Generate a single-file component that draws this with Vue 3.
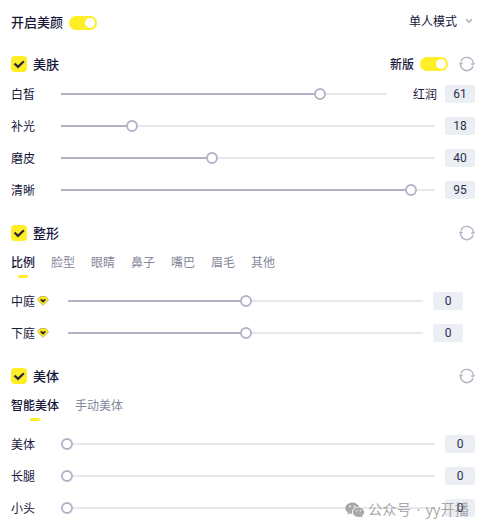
<template>
  <div class="beauty-panel">
    <header class="panel-header">
      <span class="panel-title">开启美颜</span>
      <span class="switch"></span>
      <div class="mode-select">
        <span>单人模式</span>
        <svg class="arrow" viewBox="0 0 8 6">
          <path d="M1 1.2 L4 4.2 L7 1.2" />
        </svg>
      </div>
    </header>

    <section v-for="section in sections" :key="section.title" class="section">
      <div class="section-header">
        <svg class="checkbox" viewBox="0 0 16 16">
          <rect width="16" height="16" rx="4" />
          <path d="M3.5 7.5 L7 10.9 L12.9 5.2" />
        </svg>
        <span class="section-title">{{ section.title }}</span>
        <div class="section-actions">
          <template v-if="section.switchLabel">
            <span class="switch-label">{{ section.switchLabel }}</span>
            <span class="switch"></span>
          </template>
          <svg class="reset" viewBox="0 0 16 16">
            <path d="M1.9 5.6 A6.4 6.4 0 0 1 14.3 8.2" />
            <path d="M14.1 10 A6.4 6.4 0 0 1 1.6 7.4" />
            <path d="M12.2 7.9 L14.2 8.5 L15.4 7.2" />
            <path d="M0.6 8.4 L1.7 7.1 L3.7 7.7" />
          </svg>
        </div>
      </div>

      <div v-if="section.tabs" class="tabs">
        <span
          v-for="(tab, index) in section.tabs"
          :key="tab"
          class="tab"
          :class="{ active: index === 0 }"
        >
          {{ tab }}
        </span>
      </div>

      <div
        v-for="item in section.items"
        :key="item.label"
        class="row"
        :class="{ vip: item.vip }"
      >
        <div class="label">
          <span>{{ item.label }}</span>
          <svg v-if="item.vip" class="gem" viewBox="0 0 12 10">
            <path class="gem-body" d="M3 0.5 H9 L11.6 3.8 L6 9.5 L0.4 3.8 Z" />
            <path
              class="gem-mark"
              d="M3.2 3.6 L4.4 2.9 L6 4.1 L7.6 2.9 L8.8 3.6 L8.5 4.5 L6 6.7 L3.5 4.5 Z"
            />
          </svg>
        </div>
        <div class="slider">
          <div class="fill" :style="{ width: item.percent + '%' }"></div>
          <div class="knob"></div>
        </div>
        <span v-if="item.extra" class="extra">{{ item.extra }}</span>
        <span class="value">{{ item.value }}</span>
      </div>
    </section>

    <div class="watermark">
      <svg class="wechat" viewBox="0 0 20 16">
        <path
          d="M7.3 0.5 C3.4 0.5 0.4 3 0.4 6.2 C0.4 8 1.4 9.6 3 10.6 L2.4 12.7 L4.8 11.5 C5.6 11.7 6.4 11.8 7.2 11.8 C6.1 7.8 9.3 4.7 14 4.8 C13.3 2.3 10.6 0.5 7.3 0.5 Z"
        />
        <path
          d="M13.5 5.6 C10.2 5.6 7.8 7.7 7.8 10.3 C7.8 13 10.3 15 13.5 15 C14.2 15 14.9 14.9 15.5 14.7 L17.6 15.8 L17 13.9 C18.4 13 19.2 11.8 19.2 10.3 C19.2 7.7 16.8 5.6 13.5 5.6 Z"
        />
        <g class="eyes">
          <circle cx="5" cy="4.4" r="0.9" />
          <circle cx="9.6" cy="4.4" r="0.9" />
          <circle cx="11.7" cy="8.8" r="0.8" />
          <circle cx="15.4" cy="8.8" r="0.8" />
        </g>
      </svg>
      <span>公众号 · yy开播</span>
    </div>
  </div>
</template>

<script setup>
import { ref } from "vue";

// percent is the knob position, value is the number in the box
const sections = ref([
  {
    title: "美肤",
    switchLabel: "新版",
    items: [
      { label: "白皙", percent: 80.6, value: 61, extra: "红润" },
      { label: "补光", percent: 18, value: 18 },
      { label: "磨皮", percent: 40, value: 40 },
      { label: "清晰", percent: 95, value: 95 },
    ],
  },
  {
    title: "整形",
    tabs: ["比例", "脸型", "眼睛", "鼻子", "嘴巴", "眉毛", "其他"],
    items: [
      { label: "中庭", percent: 50, value: 0, vip: true },
      { label: "下庭", percent: 50, value: 0, vip: true },
    ],
  },
  {
    title: "美体",
    tabs: ["智能美体", "手动美体"],
    items: [
      { label: "美体", percent: 0, value: 0 },
      { label: "长腿", percent: 0, value: 0 },
      { label: "小头", percent: 0, value: 0 },
    ],
  },
]);
</script>

<style>
body {
  margin: 0;
  background: #fff;
}
</style>

<style scoped>
.beauty-panel {
  position: relative;
  box-sizing: border-box;
  width: 484px;
  height: 529px;
  padding: 0 9px 0 11px;
  overflow: hidden;
  background: #fff;
  color: #17173a;
  font-family: "Noto Sans CJK SC", sans-serif;
  font-size: 12px;
  line-height: 18px;
  white-space: nowrap;
}

.panel-header {
  display: flex;
  align-items: center;
  height: 45px;
}

.panel-title {
  margin-right: 6px;
  padding-bottom: 2px;
  font-size: 13px;
  font-weight: 500;
}

.switch {
  box-sizing: border-box;
  display: flex;
  justify-content: flex-end;
  width: 28px;
  height: 14px;
  padding: 2px;
  border-radius: 7px;
  background: #ffee26;
}

.switch::after {
  content: "";
  width: 10px;
  height: 10px;
  border-radius: 50%;
  background: #fff;
}

.mode-select {
  display: flex;
  align-items: center;
  gap: 8px;
  margin-left: auto;
  margin-right: 2px;
  padding-bottom: 4px;
}

.arrow {
  width: 8px;
  height: 6px;
  fill: none;
  stroke: #b9bac9;
  stroke-width: 1.7;
}

.section {
  margin-bottom: 13px;
}

.panel-header + .section {
  margin-top: 5px;
}

.section-header {
  display: flex;
  align-items: center;
  height: 28px;
}

.checkbox {
  width: 16px;
  height: 16px;
  margin-right: 6px;
}

.checkbox rect {
  fill: #ffee26;
}

.checkbox path {
  fill: none;
  stroke: #2b2b35;
  stroke-width: 2.2;
}

.section-title {
  font-size: 13px;
  font-weight: 500;
}

.section-actions {
  display: flex;
  align-items: center;
  margin-left: auto;
}

.switch-label {
  margin-right: 6px;
  font-weight: 500;
}

.reset {
  width: 16px;
  height: 16px;
  margin-left: 11px;
  margin-bottom: 1px;
  fill: none;
  stroke: #b3b5c7;
  stroke-width: 1.5;
}

.tabs {
  display: flex;
  gap: 16px;
  height: 38px;
}

.tab {
  display: flex;
  flex-direction: column;
  align-items: center;
  padding-top: 6px;
  color: #85879a;
}

.tab.active {
  color: #17173a;
  font-weight: 500;
}

.tab.active::after {
  content: "";
  width: 10px;
  height: 3px;
  margin-top: 4px;
  border-radius: 2px;
  background: #ffee26;
}

.row {
  display: flex;
  align-items: center;
  height: 32px;
}

.row.vip {
  padding-right: 12px;
}

.label {
  display: flex;
  align-items: center;
  flex: none;
  width: 50px;
}

.vip .label {
  width: 57px;
}

.gem {
  width: 12px;
  height: 10px;
  margin-left: 2px;
  margin-bottom: 1px;
}

.gem-body {
  fill: #ffe51f;
  stroke: #a59a45;
  stroke-width: 0.6;
}

.gem-mark {
  fill: #2b2b35;
}

.slider {
  display: flex;
  align-items: center;
  flex: 1;
  height: 2px;
  padding-right: 12px;
  background: #e7e7ee;
}

.fill {
  height: 2px;
  background: #b0b2c6;
}

.knob {
  box-sizing: border-box;
  flex: none;
  width: 12px;
  height: 12px;
  margin-right: -12px;
  border: 2px solid #b3b5c8;
  border-radius: 50%;
  background: #fff;
}

.extra {
  margin-left: 26px;
  margin-right: -2px;
}

.value {
  flex: none;
  width: 30px;
  height: 18px;
  margin-left: 10px;
  border-radius: 2px;
  background: #ebeef3;
  color: #2c2c4c;
  font-family: Roboto, sans-serif;
  text-align: center;
}

/* sits over the last slider row */
.watermark {
  position: absolute;
  right: 15px;
  bottom: 9px;
  display: flex;
  align-items: center;
  gap: 3px;
  color: rgba(120, 120, 120, 0.65);
  font-family: "Noto Sans", "Noto Sans CJK SC", sans-serif;
  font-size: 14.3px;
  line-height: 20px;
  word-spacing: 1.8px;
}

.wechat {
  width: 20px;
  height: 16px;
  fill: #a9a9a9;
}

.eyes {
  fill: #f4f4f4;
}
</style>
